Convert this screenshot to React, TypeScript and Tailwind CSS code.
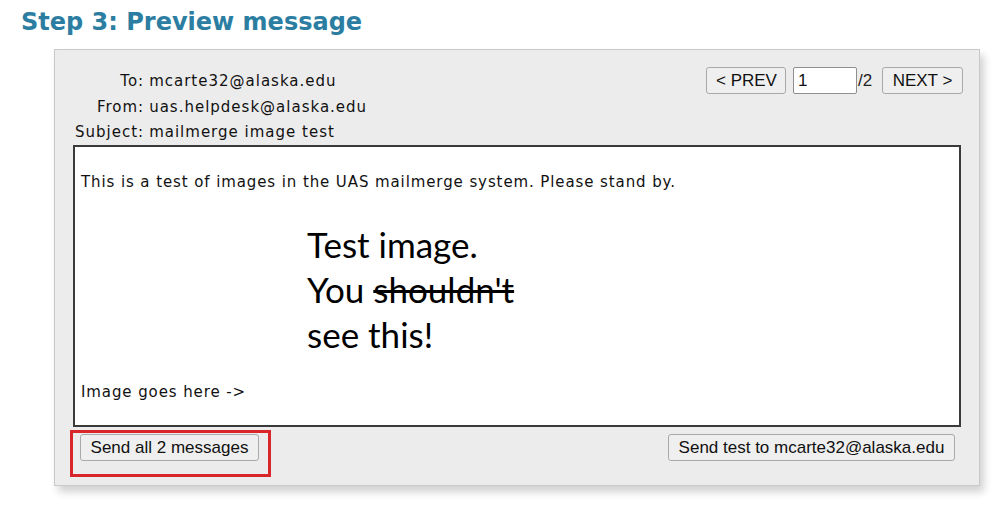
import React from 'react'

const verdana = { fontFamily: '"DejaVu Sans", Verdana, sans-serif' }

function Btn({ children, className = '' }: { children: React.ReactNode; className?: string }) {
  return (
    <button
      className={`h-[27px] px-[9px] rounded-[3px] border border-[#a9a9a9] bg-[#efefef] text-[17px] leading-none whitespace-nowrap text-[#111] font-['Liberation_Sans',Arial,sans-serif] ${className}`}
    >
      {children}
    </button>
  )
}

export default function App() {
  return (
    <div className="w-[998px] h-[522px] bg-white overflow-hidden">
      {/* Heading */}
      <h2
        className="pl-[21px] pt-[6px] h-[40px] text-[24px] leading-[32px] font-bold text-[#2b7ea1]"
        style={verdana}
      >
        Step 3: Preview message
      </h2>

      {/* Preview panel */}
      <div
        className="ml-[54px] mt-[9px] w-[926px] h-[437px] bg-[#ececec] border border-[#c9c9c9] shadow-[4px_6px_8px_rgba(0,0,0,0.18)] flex flex-col px-[18px] pt-[17px]"
        style={verdana}
      >
        {/* Header */}
        <div className="flex justify-between">
          <div className="grid grid-cols-[auto_auto] gap-x-[5px] pt-[2px] text-[15px] tracking-[1px] leading-[25.5px] text-[#111] ml-[2px]">
            <span className="text-right">To:</span>
            <span>mcarte32@alaska.edu</span>
            <span className="text-right">From:</span>
            <span>uas.helpdesk@alaska.edu</span>
            <span className="text-right">Subject:</span>
            <span>mailmerge image test</span>
          </div>
          <div className="flex items-start mr-[-2px] font-['Liberation_Sans',Arial,sans-serif] text-[17px]">
            <Btn className="w-[80px] px-0">&lt; PREV</Btn>
            <input
              defaultValue="1"
              className="ml-[7px] w-[64px] h-[27px] border border-[#8f8f8f] bg-white rounded-[2px] px-[4px] text-[17px] text-[#111] outline-none"
            />
            <span className="w-[25px] h-[27px] leading-[27px] text-[#222] pl-[1px]">/2</span>
            <Btn className="w-[81px] px-0">NEXT &gt;</Btn>
          </div>
        </div>

        {/* Message body */}
        <div className="mt-[-1px] h-[282px] bg-white border-2 border-[#3a3a3a] px-[6px] flex flex-col text-[15px] tracking-[0.9px] text-[#111]">
          <p className="mt-[26px] leading-[18px]">
            This is a test of images in the UAS mailmerge system. Please stand by.
          </p>
          <div className="mt-[31px] ml-[226px] text-[35px] tracking-normal leading-[45px] text-black font-['Lato','Open_Sans',sans-serif]">
            <div>Test image.</div>
            <div>
              You <span className="line-through decoration-[3px]">shouldn't</span>
            </div>
            <div>see this!</div>
          </div>
          <p className="mt-[26px] leading-[18px]">Image goes here -&gt;</p>
        </div>

        {/* Actions */}
        <div className="flex justify-between items-start mt-[3px]">
          <div className="ml-[-3px] w-[201px] h-[47px] border-[3px] border-[#d8262a] pl-[7px] pt-[1px]">
            <Btn className="w-[179px] px-0">Send all 2 messages</Btn>
          </div>
          <Btn className="mt-[4px] mr-[6px] w-[287px] px-0">Send test to mcarte32@alaska.edu</Btn>
        </div>
      </div>
    </div>
  )
}
